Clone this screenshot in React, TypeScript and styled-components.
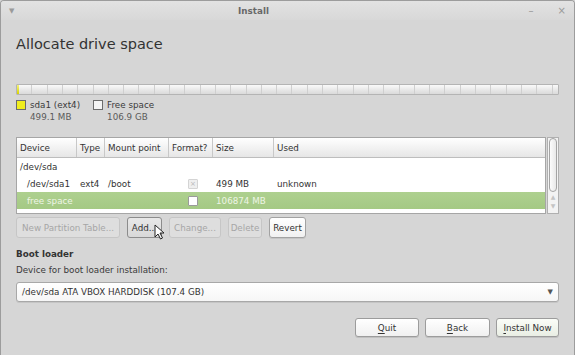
import type { FC } from 'react';
import styled, { createGlobalStyle, css } from 'styled-components';

const GlobalStyle = createGlobalStyle`
    html, body {
        margin: 0;
        padding: 0;
        background: #d6d6d6;
    }

    body {
        font-family: 'DejaVu Sans', 'Noto Sans', sans-serif;
        font-size: 8.75px;
        color: #3a3a3a;
    }
`;

const StyledWindow = styled.div`
    position: relative;
    width: 575px;
    height: 355px;
    box-sizing: border-box;
    border: 1px solid #9c9c9c;
    border-bottom: none;
    border-radius: 4px 4px 0 0;
    background: #d6d6d6;
    display: flex;
    flex-direction: column;
    overflow: hidden;
`;

const StyledTitleBar = styled.div`
    height: 19px;
    display: grid;
    grid-template-columns: 1fr auto 1fr;
    align-items: center;
    padding: 0 8px 0 8px;
    background: linear-gradient(#e2e2e2, #d8d8d8);
    color: #9a9a9a;
`;

const StyledTitle = styled.span`
    font-weight: 700;
    color: #686868;
    padding-right: 68px;
`;

const StyledTitleControls = styled.div`
    justify-self: end;
    display: flex;
    gap: 24px;
    font-size: 10px;
`;

const StyledBody = styled.div`
    flex: 1;
    display: flex;
    flex-direction: column;
    padding: 0 15px 0 15px;
`;

const StyledHeading = styled.h1`
    margin: 15px 0 0;
    font-size: 14.5px;
    line-height: 18px;
    font-weight: 400;
    color: #333;
`;

const StyledDiskBar = styled.div`
    margin-top: 31px;
    height: 9px;
    border: 1px solid #b4b4b4;
    border-radius: 1px;
    display: flex;
    background:
        repeating-linear-gradient(90deg, transparent 0 14.3px, #cfcfcf 14.3px 15.3px),
        linear-gradient(#fafafa, #e6e6e6 60%, #dadada);
`;

const StyledDiskUsed = styled.div`
    width: 2px;
    background: linear-gradient(#f4f27a, #d8d400);
`;

const StyledLegend = styled.div`
    margin-top: 4px;
    display: flex;
    gap: 13px;
`;

const StyledLegendItem = styled.div`
    display: flex;
    gap: 4px;
    line-height: 12px;
`;

const StyledSwatch = styled.span<{ $color: string }>`
    width: 8px;
    height: 8px;
    margin-top: 1px;
    border: 1px solid #6c6c6c;
    background: ${({ $color }) => $color};
`;

const StyledLegendSize = styled.div`
    color: #5a5a5a;
`;

const StyledTableArea = styled.div`
    margin-top: 14px;
    height: 77px;
    display: flex;
    gap: 1px;
`;

const StyledTable = styled.div`
    flex: 1;
    border: 1px solid #a6a6a6;
    background: #fff;
    display: flex;
    flex-direction: column;
`;

const COLUMNS = '60px 28px 64px 44px 61px 1fr';

const StyledHeaderRow = styled.div`
    display: grid;
    grid-template-columns: ${COLUMNS};
    height: 19px;
    background: linear-gradient(#ffffff, #f0f0f0 60%, #e6e6e6);
    border-bottom: 1px solid #bdbdbd;
`;

const StyledHeaderCell = styled.div`
    display: flex;
    align-items: center;
    padding-left: 3px;
    border-right: 1px solid #c8c8c8;
    color: #333;

    &:last-child {
        border-right: none;
    }
`;

const StyledRow = styled.div<{ $selected?: boolean }>`
    display: grid;
    grid-template-columns: ${COLUMNS};
    height: 17px;
    align-items: center;
    color: #333;

    ${({ $selected }) => $selected && css`
        background: linear-gradient(#aed08f, #a4c984);
        color: #eef5e6;
    `}
`;

const StyledCell = styled.div<{ $indent?: number }>`
    padding-left: ${({ $indent }) => 3 + ($indent ?? 0)}px;
    white-space: nowrap;
    display: flex;
`;

const StyledCheck = styled.span<{ $disabled?: boolean }>`
    width: 8px;
    height: 8px;
    margin-left: 16px;
    border: 1px solid ${({ $disabled }) => $disabled ? '#d4d4d4' : '#9a9a9a'};
    border-radius: 1px;
    background: ${({ $disabled }) => $disabled ? '#efefef' : '#fff'};
    color: #b8b8b8;
    font-size: 7px;
    line-height: 8px;
    text-align: center;
`;

const StyledScrollbar = styled.div`
    width: 10px;
    border: 1px solid #b0b0b0;
    background: #f3f3f3;
    display: flex;
    flex-direction: column;
    align-items: center;
`;

const StyledThumb = styled.div`
    width: 8px;
    height: 54px;
    box-sizing: border-box;
    border: 1px solid #a4a4a4;
    border-radius: 4px;
    background: linear-gradient(90deg, #fcfcfc, #e8e8e8);
`;

const StyledArrow = styled.span`
    color: #c4c4c4;
    font-size: 6px;
    line-height: 9px;
`;

const StyledActions = styled.div`
    position: relative;
    margin-top: 3px;
    display: flex;
    gap: 7px;
`;

const StyledButton = styled.button<{ $state?: 'disabled' | 'hover' | 'normal'; $width: number }>`
    height: 21px;
    width: ${({ $width }) => $width}px;
    padding: 0;
    border-radius: 3px;
    font: inherit;
    font-size: 8.75px;
    ${({ $state }) => {
        if ($state === 'disabled') return css`
            border: 1px solid #c6c6c6;
            background: #dedede;
            color: #a6a6a6;
        `;
        if ($state === 'hover') return css`
            border: 1px solid #8c8c8c;
            background: linear-gradient(#e8e8e8, #d8d8d8);
            color: #333;
        `;
        return css`
            border: 1px solid #a2a2a2;
            background: linear-gradient(#ffffff, #f1f1f1);
            color: #333;
            box-shadow: 0 1px 0 rgba(0, 0, 0, 0.08);
        `;
    }}
`;

const StyledCursor = styled.svg`
    position: absolute;
    left: 138px;
    top: 7px;
`;

const StyledSectionTitle = styled.div`
    margin-top: 10px;
    font-weight: 700;
    line-height: 12px;
    color: #333;
`;

const StyledSectionHint = styled.div`
    margin-top: 4px;
    line-height: 12px;
`;

const StyledCombo = styled.div`
    margin-top: 6px;
    height: 18px;
    border: 1px solid #a8a8a8;
    border-radius: 3px;
    background: linear-gradient(#ffffff, #f6f6f6);
    box-shadow: 0 1px 0 rgba(0, 0, 0, 0.08);
    display: flex;
    align-items: center;
    justify-content: space-between;
    padding: 0 5px 0 5px;
    color: #333;
`;

const StyledComboArrow = styled.span`
    font-size: 7px;
    color: #555;
`;

const StyledFooter = styled.div`
    margin-top: 16px;
    display: flex;
    justify-content: flex-end;
    gap: 6px;
`;

const StyledFooterButton = styled.button<{ $width: number; $default?: boolean }>`
    height: 19px;
    width: ${({ $width }) => $width}px;
    padding: 0;
    border: 1px solid #9c9c9c;
    border-radius: 3px;
    font: inherit;
    font-size: 8.75px;
    color: #333;
    background: ${({ $default }) => $default
        ? 'linear-gradient(#fbfdf8, #e9eee4)'
        : 'linear-gradient(#ffffff, #f0f0f0)'};
    box-shadow: 0 1px 0 rgba(0, 0, 0, 0.1);

    & u {
        text-decoration-thickness: 1px;
        text-underline-offset: 2px;
    }
`;

const HEADERS = ['Device', 'Type', 'Mount point', 'Format?', 'Size', 'Used'];

const App: FC = () => {
    return (
        <>
            <GlobalStyle />
            <StyledWindow>
                <StyledTitleBar>
                    <span style={{ fontSize: 7 }}>▼</span>
                    <StyledTitle>Install</StyledTitle>
                    <StyledTitleControls>
                        <span>–</span>
                        <span>×</span>
                    </StyledTitleControls>
                </StyledTitleBar>

                <StyledBody>
                    <StyledHeading>Allocate drive space</StyledHeading>

                    <StyledDiskBar>
                        <StyledDiskUsed />
                    </StyledDiskBar>

                    <StyledLegend>
                        <StyledLegendItem>
                            <StyledSwatch $color="#f0ee1e" />
                            <div>
                                <div>sda1 (ext4)</div>
                                <StyledLegendSize>499.1 MB</StyledLegendSize>
                            </div>
                        </StyledLegendItem>
                        <StyledLegendItem>
                            <StyledSwatch $color="#f4f4f4" />
                            <div>
                                <div>Free space</div>
                                <StyledLegendSize>106.9 GB</StyledLegendSize>
                            </div>
                        </StyledLegendItem>
                    </StyledLegend>

                    <StyledTableArea>
                        <StyledTable>
                            <StyledHeaderRow>
                                {HEADERS.map(h => <StyledHeaderCell key={h}>{h}</StyledHeaderCell>)}
                            </StyledHeaderRow>
                            <StyledRow>
                                <StyledCell>/dev/sda</StyledCell>
                            </StyledRow>
                            <StyledRow>
                                <StyledCell $indent={7}>/dev/sda1</StyledCell>
                                <StyledCell>ext4</StyledCell>
                                <StyledCell>/boot</StyledCell>
                                <StyledCell><StyledCheck $disabled>×</StyledCheck></StyledCell>
                                <StyledCell>499 MB</StyledCell>
                                <StyledCell>unknown</StyledCell>
                            </StyledRow>
                            <StyledRow $selected>
                                <StyledCell $indent={7}>free space</StyledCell>
                                <StyledCell />
                                <StyledCell />
                                <StyledCell><StyledCheck /></StyledCell>
                                <StyledCell>106874 MB</StyledCell>
                                <StyledCell />
                            </StyledRow>
                        </StyledTable>
                        <StyledScrollbar>
                            <StyledThumb />
                            <StyledArrow>▲</StyledArrow>
                            <StyledArrow>▼</StyledArrow>
                        </StyledScrollbar>
                    </StyledTableArea>

                    <StyledActions>
                        <StyledButton $state="disabled" $width={104}>New Partition Table...</StyledButton>
                        <StyledButton $state="hover" $width={35}>Add...</StyledButton>
                        <StyledButton $state="disabled" $width={52}>Change...</StyledButton>
                        <StyledButton $state="disabled" $width={34}>Delete</StyledButton>
                        <StyledButton $width={37}>Revert</StyledButton>
                        <StyledCursor width="11" height="16" viewBox="0 0 11 16">
                            <path d="M1 1 L1 13 L4 10 L6.5 15 L8.5 14 L6 9 L10 9 Z" fill="#fff" stroke="#222" strokeWidth="1" strokeLinejoin="round" />
                        </StyledCursor>
                    </StyledActions>

                    <StyledSectionTitle>Boot loader</StyledSectionTitle>
                    <StyledSectionHint>Device for boot loader installation:</StyledSectionHint>
                    <StyledCombo>
                        <span>/dev/sda ATA VBOX HARDDISK (107.4 GB)</span>
                        <StyledComboArrow>▼</StyledComboArrow>
                    </StyledCombo>

                    <StyledFooter>
                        <StyledFooterButton $width={64}><u>Q</u>uit</StyledFooterButton>
                        <StyledFooterButton $width={65}><u>B</u>ack</StyledFooterButton>
                        <StyledFooterButton $width={63} $default><u>I</u>nstall Now</StyledFooterButton>
                    </StyledFooter>
                </StyledBody>
            </StyledWindow>
        </>
    );
};

export default App;
